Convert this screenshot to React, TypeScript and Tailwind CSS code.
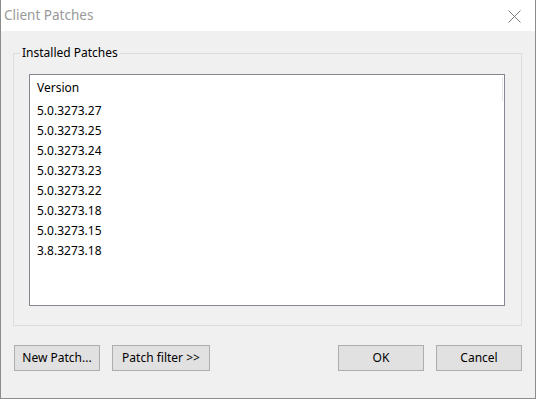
import { FC } from "react";

const versions = [
  "5.0.3273.27",
  "5.0.3273.25",
  "5.0.3273.24",
  "5.0.3273.23",
  "5.0.3273.22",
  "5.0.3273.18",
  "5.0.3273.15",
  "3.8.3273.18",
];

const Button: FC<{ label: string; width: string }> = ({ label, width }) => (
  <button
    className={`${width} h-[26px] bg-[#e1e1e1] border border-[#adadad] text-[12px] text-black leading-none`}
  >
    {label}
  </button>
);

const App: FC = () => {
  return (
    <div
      className="w-[536px] h-[399px] flex flex-col bg-[#f0f0f0] border-x border-b border-[#8c8c8c] overflow-hidden"
      style={{ fontFamily: '"Noto Sans", "Liberation Sans", sans-serif' }}
    >
      {/* title bar */}
      <div className="h-[31px] bg-white flex items-center justify-between pl-[3px] pr-[14px] shrink-0">
        <span className="text-[13.5px] text-[#999999]">Client Patches</span>
        <svg width="13" height="13" viewBox="0 0 13 13" className="mt-[1px]">
          <path d="M0.5 0.5 L12.5 12.5 M12.5 0.5 L0.5 12.5" stroke="#7a7a7a" strokeWidth="1" />
        </svg>
      </div>

      {/* group box */}
      <div className="relative ml-[12px] mt-[22px] w-[509px] h-[273px] border border-[#dcdcdc] pt-[20px] pl-[15px] pr-[16px]">
        <span className="absolute left-[6px] top-[-9px] px-[2px] bg-[#f0f0f0] text-[12px] leading-[16px] text-black">
          Installed Patches
        </span>
        <div className="relative w-[476px] h-[232px] bg-white border border-[#828790]">
          <div className="absolute left-[472px] top-[2px] w-px h-[24px] bg-[#e5e5e5]" />
          <div className="h-[26px] pl-[7px] flex items-center text-[12px] text-black">Version</div>
          {versions.map((v, i) => (
            <div key={i} className="h-[20px] pl-[7px] flex items-center text-[12px] text-black">
              {v}
            </div>
          ))}
        </div>
      </div>

      {/* buttons */}
      <div className="ml-[13px] mt-[19px] w-[508px] flex justify-between">
        <div className="flex gap-[12px]">
          <Button label="New Patch..." width="w-[86px]" />
          <Button label="Patch filter >>" width="w-[98px]" />
        </div>
        <div className="flex gap-[12px]">
          <Button label="OK" width="w-[86px]" />
          <Button label="Cancel" width="w-[86px]" />
        </div>
      </div>
    </div>
  );
};

export default App;
